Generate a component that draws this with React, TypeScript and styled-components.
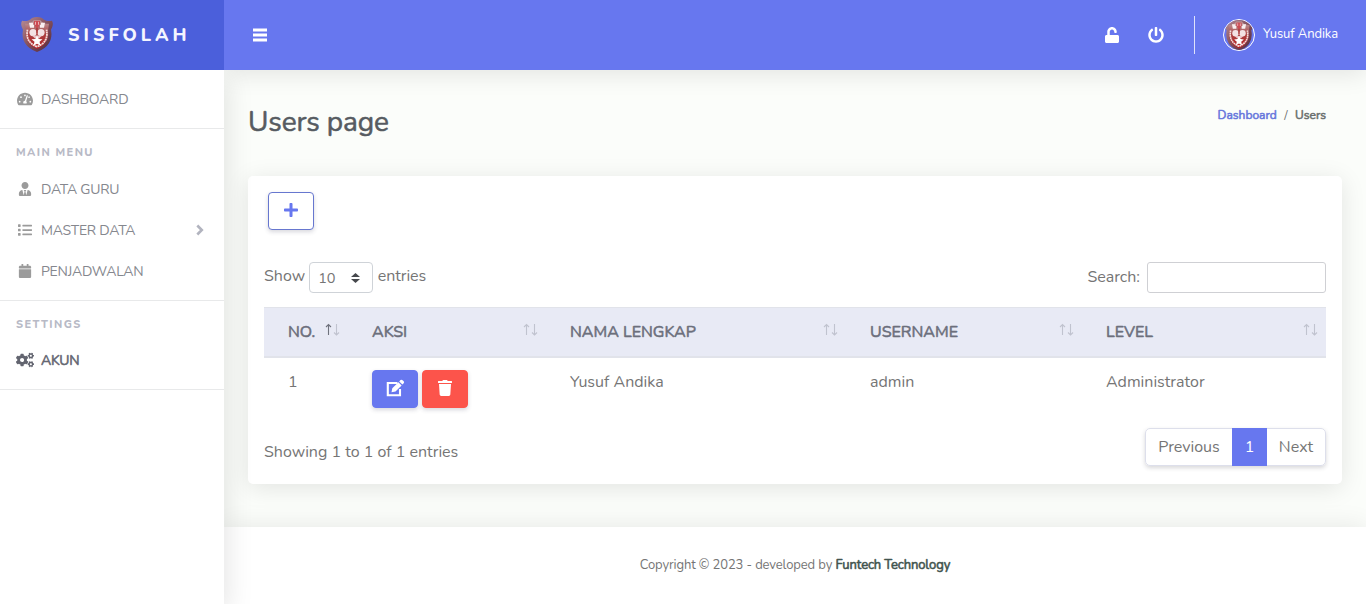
import React from 'react';
import styled, { createGlobalStyle, css } from 'styled-components';
import {
  FaTachometerAlt, FaUserTie, FaList, FaCalendar, FaCogs,
  FaUnlock, FaPowerOff, FaPlus, FaTrash,
} from 'react-icons/fa';

const Global = createGlobalStyle`
  *, *::before, *::after { box-sizing: border-box; }
  html, body { margin: 0; height: 604px; overflow: hidden; }
  body { font-family: Nunito, Lato, "Open Sans", sans-serif; font-size: 16px; line-height: 24px; color: #757575; background: #fbfdfa; }
  svg { display: block; }
`;

const Page = styled.div`
  display: grid;
  grid-template: 70px 534px / 224px 1142px;
  height: 604px;
`;

const T = styled.span<{ $ls?: number; $heavy?: boolean }>`
  letter-spacing: ${(p) => p.$ls ?? 0}px;
  white-space: nowrap;
  ${(p) => p.$heavy && css`-webkit-text-stroke: 0.55px currentColor;`}
`;

const Brand = styled.div`
  position: relative;
  z-index: 4;
  background: #4b5fdb;
  display: flex;
  align-items: center;
  padding: 0 0 1px 20px;
  color: #f4f5ff;
  font-size: 18px;
  font-weight: 800;
`;
const BrandName = styled.span`
  margin-left: 14px;
  letter-spacing: 4px;
`;

const TopBar = styled.header`
  position: relative;
  z-index: 2;
  background: #6777ef;
  color: #fff;
  display: flex;
  align-items: center;
  padding: 0 28px 0 29px;
  box-shadow: 0 4px 25px rgba(0, 0, 0, 0.1);
`;
const TopActions = styled.div`
  margin-left: auto;
  display: flex;
  align-items: center;
  gap: 28px;
`;
const Divider = styled.div`
  width: 1px;
  height: 38px;
  margin-left: 2px;
  background: #dfe2fb;
`;
const Profile = styled.div`
  display: flex;
  align-items: center;
  gap: 8px;
  font-size: 13px;
`;
const ProfileName = styled.span`
  padding-bottom: 2px;
  letter-spacing: -0.09px;
`;
const Avatar = styled.div`
  width: 32px;
  height: 32px;
  border: 1px solid #fff;
  border-radius: 50%;
  overflow: hidden;
  display: flex;
  align-items: center;
  justify-content: center;
`;

const Sidebar = styled.nav`
  position: relative;
  z-index: 3;
  background: #fff;
  box-shadow: 4px 8px 25px rgba(0, 0, 0, 0.1);
  clip-path: inset(0 -40px 0 0);
`;
const Group = styled.section<{ $first?: boolean }>`
  border-bottom: 1px solid #e8e9ea;
  padding: ${(p) => (p.$first ? '9px 0 8px' : '14px 0 8px')};
`;
const GroupTitle = styled.h2<{ $gap: number }>`
  margin: 0 0 ${(p) => p.$gap}px;
  padding-left: 16px;
  font-size: 11px;
  font-weight: 800;
  line-height: 20px;
  color: #b8bac6;
`;
const Item = styled.a<{ $active?: boolean }>`
  display: grid;
  grid-template-columns: 18px 1fr 8px;
  column-gap: 7px;
  align-items: center;
  height: 41px;
  padding: 0 20px 0 16px;
  font-size: 14px;
  letter-spacing: -0.25px;
  color: ${(p) => (p.$active ? '#656772' : '#85878e')};
  svg {
    color: ${(p) => (p.$active ? '#62646f' : '#9b9b9b')};
    justify-self: center;
    margin-bottom: 1px;
  }
  span { letter-spacing: inherit; }
`;

const Main = styled.main`
  display: flex;
  flex-direction: column;
`;
const Content = styled.div`
  height: 457px;
  padding: 32px 24px 0;
`;
const Heading = styled.div`
  display: flex;
  justify-content: space-between;
  height: 74px;
  padding-right: 16px;
`;
const Title = styled.h1`
  margin: 0;
  font-size: 28px;
  font-weight: 400;
  line-height: 40px;
  color: #565b61;
`;
const Crumbs = styled.div`
  display: flex;
  gap: 7.5px;
  font-size: 12px;
  line-height: 26px;
  color: #6b706e;
`;
const Link = styled.a`
  color: #6777dc;
`;

const Card = styled.section`
  height: 308px;
  padding: 16px;
  border-radius: 5px;
  background: #fff;
  box-shadow: 0 4px 25px rgba(0, 0, 0, 0.1);
`;
const Button = styled.button<{ $tone: 'outline' | 'primary' | 'danger' }>`
  width: 46px;
  height: 38px;
  padding: 0 0 2px;
  border-radius: 4px;
  border: 1px solid ${(p) => ({ outline: '#6777cf', primary: '#6777ef', danger: '#fc544b' })[p.$tone]};
  background: ${(p) => ({ outline: '#fff', primary: '#6777ef', danger: '#fc544b' })[p.$tone]};
  color: ${(p) => (p.$tone === 'outline' ? '#6777ef' : '#fff')};
  display: flex;
  align-items: center;
  justify-content: center;
  box-shadow: 0 2px 4px rgba(58, 59, 90, 0.2);
`;
const CardTop = styled.div`
  padding: 0 4px;
  height: 70px;
`;
const Controls = styled.div`
  display: flex;
  justify-content: space-between;
  height: 45px;
`;
const Control = styled.label<{ $drop?: boolean }>`
  display: flex;
  line-height: ${(p) => (p.$drop ? 30 : 28)}px;
`;
const Select = styled.span`
  width: 64px;
  height: 31px;
  margin: 0 4.5px 0 4px;
  padding: 0 12px 0 8px;
  border: 1px solid #cfd3d8;
  border-radius: 4px;
  display: flex;
  align-items: center;
  justify-content: space-between;
  font-size: 14.5px;
`;
const SearchBox = styled.input`
  width: 179px;
  height: 31px;
  margin-left: 7px;
  border: 1px solid #cfd0d4;
  border-radius: 3px;
`;

const columns = '84px 198px 300px 236px 244px';
const HeadRow = styled.div`
  display: grid;
  grid-template-columns: ${columns};
  height: 51px;
  background: #e8eaf5;
  border-top: 1px solid #e1e3ea;
  border-bottom: 2px solid #e1e3ea;
  color: #6c6f7c;
`;
const HeadCell = styled.div`
  display: flex;
  justify-content: space-between;
  padding: 12px 8px 0 24px;
`;
const BodyRow = styled.div`
  display: grid;
  grid-template-columns: ${columns};
  height: 70px;
`;
const Cell = styled.div`
  display: flex;
  gap: 4px;
  padding: 12px 0 0 24px;
`;
const CardFoot = styled.div`
  display: flex;
  justify-content: space-between;
`;
const Info = styled.div`
  padding-top: 12px;
`;
const Pager = styled.div`
  display: flex;
  height: 38px;
  border: 1px solid #dddfeb;
  border-radius: 5px;
  box-shadow: 0 2px 4px rgba(58, 59, 69, 0.2);
`;
const PageLink = styled.a<{ $w: number; $on?: boolean }>`
  width: ${(p) => p.$w}px;
  text-align: center;
  line-height: 36px;
  ${(p) => p.$on && css`margin: -1px 0; line-height: 38px; background: #6777ef; color: #fff;`}
`;

const Footer = styled.footer`
  height: 77px;
  background: #fff;
  padding: 26px 0 0;
  text-align: center;
  font-size: 13px;
  box-shadow: 0 0 25px rgba(0, 0, 0, 0.09);
`;
const Company = styled.span`
  color: #42544f;
`;

function Crest({ width, height }: { width: number; height: number }) {
  return (
    <svg width={width} height={height} viewBox="0 0 34 38" preserveAspectRatio="none">
      <defs>
        <linearGradient id="rim" x1="0" y1="0" x2="1" y2="1">
          <stop offset="0" stopColor="#b98f98" />
          <stop offset=".5" stopColor="#83505c" />
          <stop offset="1" stopColor="#4c2638" />
        </linearGradient>
        <linearGradient id="field" x1="0" y1="0" x2="0" y2="1">
          <stop offset="0" stopColor="#bda2a6" />
          <stop offset=".5" stopColor="#ab4040" />
          <stop offset="1" stopColor="#b51f22" />
        </linearGradient>
      </defs>
      <path d="M2 5Q9 6 12 2Q17 0 22 2Q25 6 32 5Q34 9 31 14Q34 30 17 37Q0 30 3 14Q0 9 2 5Z" fill="url(#rim)" />
      <path d="M5 8Q11 8 14 4H20Q23 8 29 8L28 15Q30 28 17 34Q4 28 6 15Z" fill="url(#field)" />
      <path d="M7.500 14Q5 27 17 31.500Q29 27 26.500 14" fill="none" stroke="#f2dede" strokeWidth="1.800" strokeDasharray="2 .5" />
      <path d="M9 7h4v2h1v3h-4zM25 7h-4v2h-1v3h4z" fill="#f9eff0" />
      <path d="M14 5h6v3l-2 4h-2l-2-4z" fill="#cc4a52" />
      <path d="M15.500 6v3M18.500 6v3" stroke="#f1cdd0" strokeWidth=".8" />
      <ellipse cx="13" cy="17" rx="3.600" ry="3.700" fill="#f3e2e4" />
      <ellipse cx="21" cy="17" rx="3.600" ry="3.700" fill="#f3e2e4" />
      <path d="M12 20h10l-3 3h-4z" fill="#e9c6c9" />
      <path d="M17 20l1.500 3.500 4 .500-3 2.500 1 4-3.500-2-3.500 2 1-4-3-2.500 4-.500z" fill="#fff" />
      <path d="M16.300 12h1.400v6h-1.400z" fill="#a33" />
    </svg>
  );
}

function MenuBars() {
  return (
    <svg width="14" height="15" viewBox="0 0 14 15" fill="#fff">
      <path d="M0 .5h14v3H0zM0 5.500h14v3H0zM0 10.500h14v3H0z" />
    </svg>
  );
}

function PencilSquare() {
  return (
    <svg width="19" height="18" viewBox="0 0 19 18">
      <path d="M11.500 4H1.800V16.200H14V10" fill="none" stroke="#fff" strokeWidth="2.100" />
      <path d="M5.500 13.200L6.300 9.300L12.400 3.200L15.600 6.400L9.500 12.500ZM13.200 2.400L14.500 1.100Q15.600 .3 16.600 1.200L17.700 2.300Q18.600 3.300 17.700 4.300L16.400 5.600Z" fill="#fff" />
    </svg>
  );
}

function Chevron() {
  return (
    <svg width="8" height="12" viewBox="0 0 8 12" fill="none" stroke="#b2b4bf" strokeWidth="2.600">
      <path d="M1.300 1.500L5.800 6L1.300 10.500" stroke="#b2b4bf" />
    </svg>
  );
}

function SortArrows({ ascending }: { ascending?: boolean }) {
  return (
    <svg width="16" height="20" viewBox="0 0 16 20" fill="none" stroke="#c0c3cf" strokeWidth="1.100">
      <path d="M4.500 15V4.500M2 7L4.500 4.500L7 7" stroke={ascending ? '#6f727d' : undefined} />
      <path d="M12.500 4V15M10 12.500L12.500 15L15 12.500" />
    </svg>
  );
}

const headers = ['NO.', 'AKSI', 'NAMA LENGKAP', 'USERNAME', 'LEVEL'];

export default function App() {
  return (
    <Page>
      <Global />
      <Brand>
        <Crest width={34} height={37} />
        <BrandName>SISFOLAH</BrandName>
      </Brand>
      <TopBar>
        <MenuBars />
        <TopActions>
          <FaUnlock size={16} />
          <FaPowerOff size={16} />
          <Divider />
          <Profile>
            <Avatar><Crest width={33} height={34} /></Avatar>
            <ProfileName>Yusuf Andika</ProfileName>
          </Profile>
        </TopActions>
      </TopBar>
      <Sidebar>
        <Group $first>
          <Item><FaTachometerAlt size={16} /><T>DASHBOARD</T></Item>
        </Group>
        <Group>
          <GroupTitle $gap={6}><T $ls={1.4}>MAIN MENU</T></GroupTitle>
          <Item><FaUserTie size={14} /><T>DATA GURU</T></Item>
          <Item><FaList size={14} /><T>MASTER DATA</T><Chevron /></Item>
          <Item><FaCalendar size={14} /><T>PENJADWALAN</T></Item>
        </Group>
        <Group>
          <GroupTitle $gap={5}><T $ls={1.4}>SETTINGS</T></GroupTitle>
          <Item $active><FaCogs size={18} /><T $heavy>AKUN</T></Item>
        </Group>
      </Sidebar>
      <Main>
        <Content>
          <Heading>
            <Title><T $heavy $ls={-0.1}>Users page</T></Title>
            <Crumbs>
              <Link><T $heavy>Dashboard</T></Link>
              <span>/</span>
              <T $heavy>Users</T>
            </Crumbs>
          </Heading>
          <Card>
            <CardTop><Button $tone="outline"><FaPlus size={16} /></Button></CardTop>
            <Controls>
              <Control>
                <T>Show</T>
                <Select>
                  <T>10</T>
                  <svg width="9" height="10" viewBox="0 0 9 10" fill="#46484d"><path d="M0 4L4.500 0L9 4ZM0 6H9L4.500 10Z" /></svg>
                </Select>
                <T $ls={-0.05}>entries</T>
              </Control>
              <Control $drop><T>Search:</T><SearchBox /></Control>
            </Controls>
            <HeadRow>
              {headers.map((name, i) => (
                <HeadCell key={name}><T $heavy>{name}</T><SortArrows ascending={i === 0} /></HeadCell>
              ))}
            </HeadRow>
            <BodyRow>
              <Cell>1</Cell>
              <Cell>
                <Button $tone="primary"><PencilSquare /></Button>
                <Button $tone="danger"><FaTrash size={16} /></Button>
              </Cell>
              <Cell><T>Yusuf Andika</T></Cell>
              <Cell><T>admin</T></Cell>
              <Cell><T>Administrator</T></Cell>
            </BodyRow>
            <CardFoot>
              <Info><T>Showing 1 to 1 of 1 entries</T></Info>
              <Pager>
                <PageLink $w={86}><T>Previous</T></PageLink>
                <PageLink $w={35} $on>1</PageLink>
                <PageLink $w={58}><T>Next</T></PageLink>
              </Pager>
            </CardFoot>
          </Card>
        </Content>
        <Footer>
          <T $ls={-0.12}>Copyright © 2023 - developed by </T><Company><T $heavy $ls={-0.12}>Funtech Technology</T></Company>
        </Footer>
      </Main>
    </Page>
  );
}
